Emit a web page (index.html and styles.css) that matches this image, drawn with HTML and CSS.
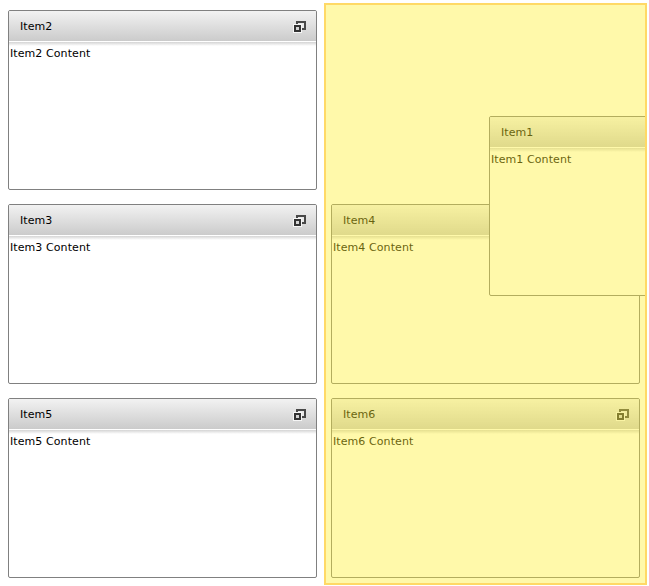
FILE: index.html
```html
<!DOCTYPE html>
<html lang="en">
<head>
    <meta charset="UTF-8">
    <title>Tile view</title>
    <link rel="stylesheet" href="styles.css">
</head>
<body>
    <svg class="defs" width="0" height="0">
        <symbol id="restore" viewBox="0 0 13 12">
            <rect x="3" y="0" width="10" height="9" fill="#484848"/>
            <rect x="5" y="2" width="6" height="5" fill="#e8e8e8"/>
            <rect x="0" y="3" width="9" height="9" fill="#f6f6f6"/>
            <rect x="1" y="4" width="7" height="7" fill="#333333"/>
            <rect x="3" y="6" width="3" height="3" fill="#d4d4d4"/>
        </symbol>
    </svg>

    <div class="page">
        <div class="board">
            <div class="tile">
                <div class="tile-header"><span>Item2</span><svg class="tile-icon"><use href="#restore"/></svg></div>
                <div class="tile-body">Item2 Content</div>
            </div>
            <div class="slot"></div>
            <div class="tile">
                <div class="tile-header"><span>Item3</span><svg class="tile-icon"><use href="#restore"/></svg></div>
                <div class="tile-body">Item3 Content</div>
            </div>
            <div class="tile">
                <div class="tile-header"><span>Item4</span><svg class="tile-icon"><use href="#restore"/></svg></div>
                <div class="tile-body">Item4 Content</div>
            </div>
            <div class="tile">
                <div class="tile-header"><span>Item5</span><svg class="tile-icon"><use href="#restore"/></svg></div>
                <div class="tile-body">Item5 Content</div>
            </div>
            <div class="tile">
                <div class="tile-header"><span>Item6</span><svg class="tile-icon"><use href="#restore"/></svg></div>
                <div class="tile-body">Item6 Content</div>
            </div>
        </div>

        <!-- tile being dragged -->
        <div class="tile dragging">
            <div class="tile-header"><span>Item1</span><svg class="tile-icon"><use href="#restore"/></svg></div>
            <div class="tile-body">Item1 Content</div>
        </div>

        <!-- drop highlight sits over the right column -->
        <div class="drop-zone"></div>
    </div>
</body>
</html>
```

FILE: styles.css
```css
body {
    margin: 0;
    background: #ffffff;
    color: #000000;
    font-family: "DejaVu Sans", Verdana, sans-serif;
    font-size: 11px;
    letter-spacing: 0.08px;
}
.defs {
    position: absolute;
}
.page {
    position: relative;
    width: 647px;
    height: 586px;
    overflow: hidden;
}
.board {
    display: grid;
    grid-template-columns: repeat(2, 309px);
    grid-template-rows: repeat(3, 180px);
    gap: 14px;
    padding: 10px 8px;
}
.tile {
    box-sizing: border-box;
    width: 309px;
    height: 180px;
    background: #ffffff;
    border: 1px solid #808080;
    border-radius: 2px;
    overflow: hidden;
}
.tile-header {
    display: flex;
    align-items: center;
    justify-content: space-between;
    height: 30px;
    padding: 0 10px 0 11px;
    background: linear-gradient(#f2f2f2, #cbcbcb);
    border-bottom: 1px solid #ffffff;
}
.tile-icon {
    width: 13px;
    height: 12px;
    margin-top: 1px;
}
.tile-body {
    padding: 5px 1px 0;
    background: linear-gradient(#d4d4d4, #ffffff 4px);
    line-height: 14px;
}
.dragging {
    position: absolute;
    left: 489px;
    top: 116px;
}
.drop-zone {
    position: absolute;
    left: 324px;
    top: 3px;
    box-sizing: border-box;
    width: 323px;
    height: 582px;
    background: rgba(255, 241, 43, 0.4);
    border: 2px solid #ffd966;
}
```
